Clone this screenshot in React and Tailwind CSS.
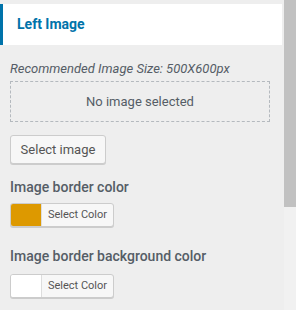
import React from 'react';

const ColorPicker = ({ color }) => (
  <button className="flex h-[24px] w-[104px] overflow-hidden rounded-[3px] border border-[#ccc] bg-[#f7f7f7] shadow-[0_1px_0_#ccc]">
    <span className="h-full w-[31px] border-r border-[#ddd]" style={{ backgroundColor: color }} />
    <span className="flex flex-1 items-center justify-center text-[11px] text-[#555]">Select Color</span>
  </button>
);

const App = () => {
  return (
    <div
      className="flex h-[310px] w-[296px] overflow-hidden bg-[#eee]"
      style={{ fontFamily: 'Roboto, "Liberation Sans", sans-serif' }}
    >
      <div className="w-[284px]">
        <div className="mt-[4px] flex h-[41px] w-[282px] items-center border-l-[3px] border-[#0073aa] bg-white pl-[14px]">
          <h3 className="text-[14px] font-bold text-[#0073aa]">Left Image</h3>
        </div>

        <div className="px-[10px] pt-[14px]">
          <p className="text-[13px] italic leading-[20px] text-[#555d66]">
            Recommended Image Size: 500X600px
          </p>
          <div className="mt-[2px] flex h-[41px] w-[260px] items-center justify-center border border-dashed border-[#b4b9be] text-[13px] text-[#555d66]">
            No image selected
          </div>
          <button className="mt-[13px] flex h-[29px] w-[96px] items-center justify-center rounded-[3px] border border-[#ccc] bg-[#f7f7f7] text-[13px] text-[#555] shadow-[0_1px_0_#ccc]">
            Select image
          </button>

          <div className="mt-[13px] text-[14px] font-medium leading-[20px] text-[#555d66]">
            Image border color
          </div>
          <div className="mt-[6px]">
            <ColorPicker color="#dd9900" />
          </div>

          <div className="mt-[19px] text-[14px] font-medium leading-[20px] text-[#555d66]">
            Image border background color
          </div>
          <div className="mt-[8px]">
            <ColorPicker color="#ffffff" />
          </div>
        </div>
      </div>

      <div className="flex w-[12px] flex-col">
        <div className="h-[207px] bg-[#c1c1c1]" />
        <div className="flex-1 bg-[#f1f1f1]" />
      </div>
    </div>
  );
};

export default App;
